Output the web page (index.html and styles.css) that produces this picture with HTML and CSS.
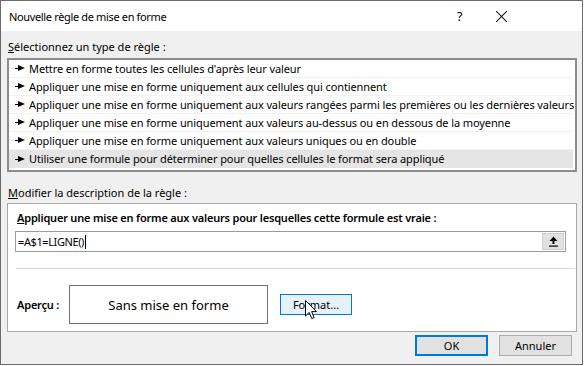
FILE: index.html
```html
<!DOCTYPE html>
<html lang="fr">
<head>
  <meta charset="UTF-8" />
  <title>Nouvelle règle de mise en forme</title>
  <link rel="stylesheet" href="styles.css">
</head>
<body>
  <div class="window">
    <!-- barre de titre -->
    <div class="titlebar">
      <span class="title">Nouvelle règle de mise en forme</span>
      <span class="help">?</span>
      <span class="close" aria-label="Fermer"></span>
    </div>

    <div class="content">
      <p class="group-label"><u>S</u>électionnez un type de règle :</p>
      <ul class="rule-list">
        <li class="rule"><span class="arrow"></span>Mettre en forme toutes les cellules d'après leur valeur</li>
        <li class="rule"><span class="arrow"></span>Appliquer une mise en forme uniquement aux cellules qui contiennent</li>
        <li class="rule"><span class="arrow"></span>Appliquer une mise en forme uniquement aux valeurs rangées parmi les premières ou les dernières valeurs</li>
        <li class="rule"><span class="arrow"></span>Appliquer une mise en forme uniquement aux valeurs au-dessus ou en dessous de la moyenne</li>
        <li class="rule"><span class="arrow"></span>Appliquer une mise en forme uniquement aux valeurs uniques ou en double</li>
        <li class="rule selected"><span class="arrow"></span>Utiliser une formule pour déterminer pour quelles cellules le format sera appliqué</li>
      </ul>

      <p class="group-label desc-label"><u>M</u>odifier la description de la règle :</p>
      <div class="desc-box">
        <p class="formula-label"><u>A</u>ppliquer une mise en forme aux valeurs pour lesquelles cette formule est vraie :</p>
        <div class="formula-input">
          <span class="formula-text">=A$1=LIGNE()</span><span class="caret"></span>
          <button class="ref-btn" type="button">
            <svg width="9" height="11" viewBox="0 0 9 11">
              <path d="M4.5 0.5 L8.5 5 L5.5 5 L5.5 8 L3.5 8 L3.5 5 L0.5 5 Z" fill="#000"/>
              <rect x="0" y="9.5" width="9" height="1.2" fill="#000"/>
            </svg>
          </button>
        </div>
        <div class="separator"></div>
        <div class="preview-row">
          <span class="preview-label">Aperçu :</span>
          <div class="preview-box">Sans mise en forme</div>
          <div class="format-wrap">
            <button class="btn btn-format" type="button">Format...</button>
            <svg class="cursor" width="13" height="20" viewBox="0 0 13 20">
              <path d="M0.5 0.5 L0.5 16 L4.2 12.4 L6.8 18.6 L9.2 17.6 L6.6 11.6 L11.5 11.6 Z" fill="#fff" stroke="#000" stroke-width="1" stroke-linejoin="miter"/>
            </svg>
          </div>
        </div>
      </div>

      <div class="actions">
        <button class="btn btn-ok" type="button">OK</button>
        <button class="btn" type="button">Annuler</button>
      </div>
    </div>
  </div>
</body>
</html>
```

FILE: styles.css
```css
:root {
  --clr-bg: #f0f0f0;
  --clr-text: #000;
  --clr-accent: #0078d7;
  --clr-btn: #e1e1e1;
  --clr-btn-border: #adadad;
}

* { box-sizing: border-box; margin: 0; padding: 0; }
body {
  font-family: "Noto Sans", "Open Sans", sans-serif;
  font-size: 11px;
  color: var(--clr-text);
  background: #fff;
}

.window {
  width: 583px;
  height: 365px;
  border: 1px solid #6b6b6b;
  background: var(--clr-bg);
}

/* ---------- barre de titre ---------- */
.titlebar {
  height: 30px;
  background: #fff;
  display: flex;
  align-items: center;
  padding-left: 8px;
}
.title { flex: 1; letter-spacing: -0.35px; }
.help { flex: none; width: 8px; margin-right: 31px; font-size: 12.5px; }

/* croix de fermeture */
.close {
  flex: none;
  position: relative;
  width: 11px;
  height: 11px;
  margin-right: 75px;
}
.close::before,
.close::after {
  content: "";
  position: absolute;
  left: -2px; top: 5px;
  width: 15px; height: 1px;
  background: #111;
  transform: rotate(45deg);
}
.close::after { transform: rotate(-45deg); }

/* ---------- contenu ---------- */
.content { padding: 0 5px 0 6px; }

.group-label {
  line-height: 16px;
  padding-left: 1px;
  margin-top: 8px;
}
.desc-label { margin-top: 13px; }

.rule-list {
  list-style: none;
  margin-top: 3px;
  height: 114px;
  background: #fff;
  border: 2px solid #8c8c8c;
  padding: 0 2px 0 0;
}
.rule {
  height: 18px;
  line-height: 18px;
  padding-left: 6px;
  border-bottom: 1px solid #f2f2f2;
  display: flex;
  align-items: center;
  white-space: nowrap;
  letter-spacing: -0.1px;
}
.rule.selected { background: #e5e5e5; border-bottom: none; }

/* petite flèche devant chaque type de règle */
.arrow {
  position: relative;
  width: 10px;
  height: 7px;
  margin-right: 4px;
  flex: none;
}
.arrow::before {
  content: "";
  position: absolute;
  left: 0; top: 3px;
  width: 5px; height: 1px;
  background: #000;
}
.arrow::after {
  content: "";
  position: absolute;
  left: 3px; top: 0;
  border-left: 7px solid #000;
  border-top: 3.5px solid transparent;
  border-bottom: 3.5px solid transparent;
}

.desc-box {
  margin-top: 2px;
  height: 129px;
  background: #fff;
  border: 1px solid #a9a9a9;
  padding: 6px 10px 0 7px;
}
.formula-label {
  font-weight: 600;
  line-height: 16px;
  padding-left: 2px;
  letter-spacing: -0.2px;
}
.formula-input {
  margin-top: 5px;
  height: 21px;
  border: 1px solid #9b9b9b;
  display: flex;
  align-items: center;
  padding: 0 1px 0 2px;
}
.formula-text { letter-spacing: -0.4px; }
.caret {
  width: 1px;
  height: 14px;
  background: #000;
  margin-left: 1px;
}
.ref-btn {
  margin-left: auto;
  width: 22px;
  height: 17px;
  background: var(--clr-btn);
  border: 1px solid #d0d0d0;
  display: flex;
  align-items: center;
  justify-content: center;
}

.separator {
  margin: 16px -9px 0 1px;
  height: 1px;
  background: #d8d8d8;
}

.preview-row {
  display: flex;
  align-items: center;
  margin-top: 16px;
}
.preview-label {
  font-weight: 600;
  padding-left: 2px;
  width: 54px;
  flex: none;
  letter-spacing: -0.2px;
}
.preview-box {
  width: 199px;
  height: 39px;
  flex: none;
  border: 1px solid #707070;
  display: flex;
  align-items: center;
  justify-content: center;
  font-size: 13px;
}

.format-wrap {
  position: relative;
  margin-left: 12px;
}
.cursor {
  position: absolute;
  left: 25px;
  top: 6px;
}

.btn {
  font-family: inherit;
  font-size: 11px;
  width: 73px;
  height: 21px;
  background: var(--clr-btn);
  border: 1px solid var(--clr-btn-border);
  color: #000;
}
.btn-format {
  width: 72px;
  background: #e5f1fb;
  border-color: var(--clr-accent);
}
.btn-ok { border: 2px solid var(--clr-accent); }

.actions {
  display: flex;
  justify-content: flex-end;
  gap: 11px;
  margin-top: 3px;
  padding-right: 5px;
}
```
